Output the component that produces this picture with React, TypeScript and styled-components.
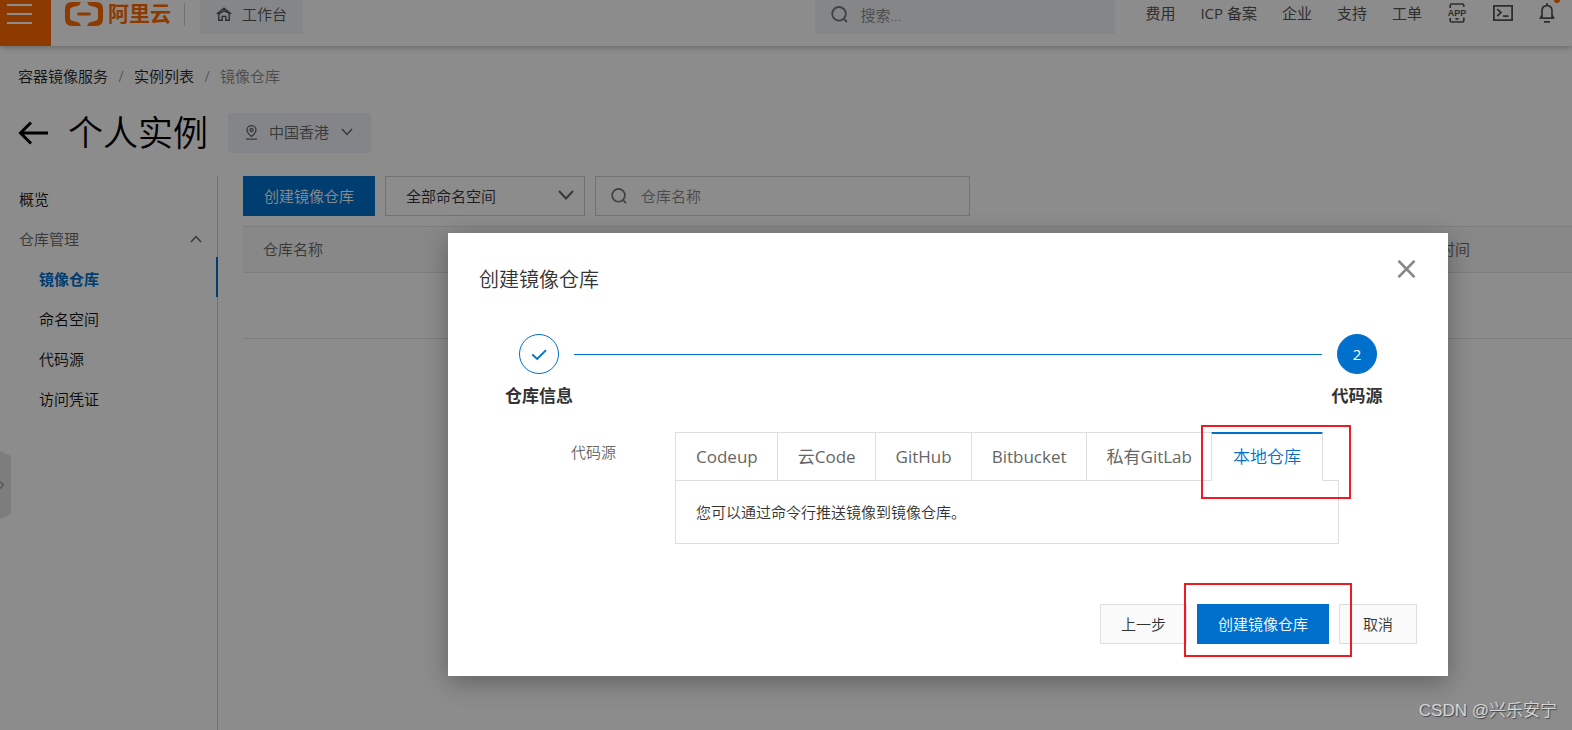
import React from 'react';
import styled, { createGlobalStyle, css } from 'styled-components';

const GlobalStyle = createGlobalStyle`
  *, *::before, *::after { box-sizing: border-box; }
  body {
    margin: 0;
    background: #fff;
    color: #333;
    font-family: "Open Sans", "Noto Sans CJK SC", sans-serif;
    font-size: 15px;
    font-weight: 350;
    line-height: 20px;
  }
  button, input, select { font: inherit; color: inherit; margin: 0; }
  button { cursor: pointer; }
  a { color: inherit; text-decoration: none; }
  svg { display: block; flex: none; }
`;

const Page = styled.div`
  position: relative;
  display: flex;
  flex-direction: column;
  min-height: 100vh;
  overflow: hidden;
`;

const TopBar = styled.header`
  display: flex;
  align-items: flex-start;
  height: 46px;
  padding-right: 17px;
  box-shadow: 0 1px 6px rgba(0, 0, 0, 0.3);
`;

const MenuButton = styled.button`
  width: 51px;
  height: 46px;
  padding: 4px 7px 0;
  border: 0;
  background: #ff6a00;
  display: flex;
  flex-direction: column;
  gap: 7px;
`;

const MenuBar = styled.span`
  height: 2px;
  width: 25px;
  background: #fff;
`;

const Logo = styled.a`
  display: flex;
  align-items: center;
  gap: 5px;
  height: 28px;
  margin-left: 14px;
  color: #ff6a00;
  font-family: "Liberation Sans", "Noto Sans CJK SC", sans-serif;
  font-size: 21px;
  line-height: 24px;
  font-weight: 700;
`;

const Divider = styled.span`
  width: 1px;
  height: 23px;
  margin: 3px 15px 0 13px;
  background: #d0d0d0;
`;

const Workbench = styled.button`
  display: flex;
  align-items: center;
  gap: 10px;
  height: 34px;
  padding: 0 16px 6px;
  border: 0;
  background: #f3f5f8;
  color: #555;
`;

const TopSearch = styled.label`
  display: flex;
  align-items: center;
  gap: 12px;
  width: 300px;
  height: 34px;
  padding: 0 16px 5px;
  margin-left: auto;
  background: #f3f5f8;
  color: #777;
`;

const PlainInput = styled.input`
  flex: 1;
  min-width: 0;
  padding: 0;
  border: 0;
  outline: 0;
  background: none;
  &::placeholder { color: #888; opacity: 1; }
`;

const TopNav = styled.nav`
  display: flex;
  align-items: center;
  gap: 25px;
  height: 26px;
  margin-left: 30px;
  color: #555;
  font-weight: 400;
`;

const NavIcons = styled.div`
  display: flex;
  align-items: center;
  gap: 26px;
`;

const IconButton = styled.button`
  padding: 0;
  border: 0;
  background: none;
  color: #555;
`;

const Bell = styled(IconButton)`
  position: relative;
  &::after {
    content: '';
    position: absolute;
    top: -6px;
    right: -5px;
    width: 6px;
    height: 6px;
    border-radius: 3px;
    background: #ff6a00;
  }
`;

const Breadcrumb = styled.nav`
  display: flex;
  padding: 20px 18px 0;
  color: #222;
`;

const Slash = styled.span`
  width: 26px;
  text-align: center;
  color: #777;
`;

const Current = styled.span`
  color: #888;
`;

const TitleRow = styled.div`
  display: flex;
  align-items: center;
  height: 40px;
  margin-top: 27px;
  padding-left: 18px;
`;

const Title = styled.h1`
  margin: 0 20px;
  color: #000;
  font-size: 35px;
  line-height: 40px;
  font-weight: 350;
`;

const Region = styled.button`
  display: flex;
  align-items: center;
  height: 40px;
  padding: 0 18px 2px;
  gap: 12px;
  border: 0;
  border-radius: 2px;
  background: #f0f3f7;
  color: #666;
`;

const Body = styled.div`
  flex: 1;
  display: flex;
  margin-top: 23px;
`;

const Sidebar = styled.nav`
  width: 218px;
  flex: none;
  padding-top: 1px;
  border-right: 1px solid #ccc;
  color: #111;
`;

const Item = styled.a<{ $sub?: boolean; $active?: boolean }>`
  display: flex;
  align-items: center;
  justify-content: space-between;
  height: 40px;
  padding: 4px 15px 0 ${p => (p.$sub ? 39 : 19)}px;
  ${p => p.$active && css`
    margin-right: -1px;
    border-right: 2px solid #0070cc;
    color: #0070cc;
    font-weight: 700;
  `}
`;

const Group = styled(Item)`
  color: #666;
`;

const Main = styled.main`
  flex: 1;
  min-width: 0;
  margin-left: 25px;
`;

const Toolbar = styled.div`
  display: flex;
  gap: 10px;
  margin-bottom: 10px;
`;

const Button = styled.button<{ $primary?: boolean }>`
  height: 40px;
  min-width: 78px;
  padding: 0 20px;
  border: 1px solid ${p => (p.$primary ? '#0070cc' : '#dedede')};
  background: ${p => (p.$primary ? '#0070cc' : '#fafafa')};
  color: ${p => (p.$primary ? '#fff' : '#333')};
`;

const SelectWrap = styled.div`
  position: relative;
  width: 200px;
  svg {
    position: absolute;
    top: 14px;
    right: 11px;
    pointer-events: none;
  }
`;

const Select = styled.select`
  appearance: none;
  width: 100%;
  height: 40px;
  padding: 0 20px;
  border: 1px solid #d0d0d0;
  border-radius: 0;
  background: #fff;
`;

const RepoSearch = styled.label`
  display: flex;
  align-items: center;
  gap: 14px;
  width: 375px;
  height: 40px;
  padding: 0 15px;
  border: 1px solid #d0d0d0;
  color: #777;
`;

const Table = styled.table`
  width: 100%;
  border-collapse: collapse;
  table-layout: fixed;
  border-top: 1px solid #e3e3e3;
  border-bottom: 1px solid #e3e3e3;
  th {
    height: 46px;
    padding: 0 20px 2px;
    background: #f7f7f7;
    border-bottom: 1px solid #e3e3e3;
    color: #666;
    font-weight: 350;
    text-align: left;
  }
  th:last-child { width: 182px; }
  td { height: 66px; }
`;

const Handle = styled.button`
  position: absolute;
  left: 0;
  top: 451px;
  padding: 0;
  border: 0;
  background: none;
`;

const Mask = styled.div`
  position: absolute;
  inset: 0;
  display: flex;
  align-items: flex-start;
  justify-content: flex-end;
  padding: 233px 124px 0;
  background: rgba(0, 0, 0, 0.45);
`;

const Dialog = styled.section`
  width: 1000px;
  max-width: 100%;
  padding: 27px 31px 32px;
  background: #fff;
  box-shadow: 0 6px 24px rgba(0, 0, 0, 0.3);
`;

const DialogHead = styled.header`
  display: flex;
  align-items: flex-start;
  justify-content: space-between;
`;

const DialogTitle = styled.h2`
  margin: 5px 0 0;
  font-size: 20px;
  line-height: 30px;
  font-weight: 350;
`;

const Steps = styled.ol`
  display: flex;
  list-style: none;
  margin: 39px 0 0;
  padding: 0 25px;
`;

const Step = styled.li`
  display: flex;
  flex-direction: column;
  align-items: center;
  gap: 10px;
  width: 70px;
  font-size: 17px;
  line-height: 24px;
  font-weight: 700;
  white-space: nowrap;
`;

const StepMark = styled.span<{ $current?: boolean }>`
  display: flex;
  align-items: center;
  justify-content: center;
  width: 40px;
  height: 40px;
  border: 1px solid #0070cc;
  border-radius: 50%;
  background: ${p => (p.$current ? '#0070cc' : '#fff')};
  color: ${p => (p.$current ? '#fff' : '#0070cc')};
  font-size: 15px;
  font-weight: 400;
`;

const StepLine = styled.li`
  flex: 1;
  height: 1px;
  margin-top: 20px;
  background: #0070cc;
`;

const Field = styled.div`
  display: grid;
  grid-template-columns: 137px minmax(0, 1fr);
  column-gap: 59px;
  margin-top: 24px;
  padding-right: 78px;
`;

const FieldLabel = styled.span`
  padding-top: 10px;
  text-align: right;
  color: #666;
`;

const TabList = styled.div`
  display: flex;
`;

const Tab = styled.button<{ $active?: boolean }>`
  position: relative;
  height: 49px;
  margin-bottom: -1px;
  padding: 0 19px 0 20px;
  border: 1px solid #dedede;
  border-right-width: 0;
  background: #fff;
  color: #666;
  font-size: 17px;
  font-weight: 400;
  line-height: 24px;
  white-space: nowrap;
  ${p => p.$active && css`
    padding: 0 21px;
    border-right-width: 1px;
    border-bottom-color: #fff;
    box-shadow: inset 0 1px #0070cc;
    border-top-color: #0070cc;
    color: #0070cc;
    font-weight: 350;
  `}
`;

const TabPanel = styled.div`
  padding: 21px 20px;
  border: 1px solid #dedede;
`;

const Footer = styled.footer`
  display: flex;
  justify-content: flex-end;
  gap: 10px;
  margin-top: 60px;
`;

const Marked = styled.div`
  position: relative;
  display: flex;
`;

const Highlight = styled.span<{ $inset: string }>`
  position: absolute;
  inset: ${p => p.$inset};
  z-index: 1;
  border: 2px solid #ed1c24;
  pointer-events: none;
`;

const Watermark = styled.span`
  position: absolute;
  right: 15px;
  bottom: 8px;
  color: #d6d6d6;
  font-family: "Liberation Sans", "Noto Sans CJK SC", sans-serif;
  font-size: 17px;
  line-height: 22px;
  text-shadow: 1px 1px 1px #444;
`;

const SearchIcon = ({ size }: { size: number }) => (
  <svg width={size} height={size} viewBox="0 0 17 17" fill="none" stroke="currentColor" strokeWidth="1.8">
    <circle cx="8" cy="7.8" r="6.8" />
    <path d="M12.6 12.6 16 16" />
  </svg>
);

const Chevron = ({ width, up, stroke = 1.5 }: { width: number; up?: boolean; stroke?: number }) => (
  <svg width={width} height={width / 2 + 2} viewBox={`0 0 ${width} ${width / 2 + 2}`} fill="none" stroke="#666" strokeWidth={stroke}>
    <path d={up ? `M1 ${width / 2 + 1} L${width / 2} 1.5 L${width - 1} ${width / 2 + 1}` : `M1 1 L${width / 2} ${width / 2 + 0.5} L${width - 1} 1`} />
  </svg>
);

const tabs = ['Codeup', '云Code', 'GitHub', 'Bitbucket', '私有GitLab'];
const navLinks = ['费用', 'ICP 备案', '企业', '支持', '工单'];

export default function App() {
  return (
    <Page>
      <GlobalStyle />
      <TopBar>
        <MenuButton aria-label="菜单"><MenuBar /><MenuBar /><MenuBar /></MenuButton>
        <Logo href="#">
          <svg width="38" height="24" viewBox="0 0 38 24" fill="none" stroke="#ff6a00">
            <path fill="#ff6a00" stroke="none" d="M16 0H7Q0 0 0 7V17Q0 24 7 24H16L14 20.4 7 18.8Q5 18.2 5 16V8Q5 5.8 7 5.2L14 3.6ZM22 0H31Q38 0 38 7V17Q38 24 31 24H22L24 20.4 31 18.8Q33 18.2 33 16V8Q33 5.8 31 5.2L24 3.6Z" />
            <path d="M12.5 12H25.5" strokeWidth="3" />
          </svg>
          阿里云
        </Logo>
        <Divider />
        <Workbench>
          <svg width="16" height="14" viewBox="0 0 16 14" fill="none" stroke="currentColor" strokeWidth="1.4">
            <path d="M.8 7 8 1.2 15.2 7M2.8 6V13.2H6.2V9.4H9.8V13.2H13.2V6L8 3.8 2.8 7" />
          </svg>
          工作台
        </Workbench>
        <TopSearch>
          <SearchIcon size={17} />
          <PlainInput placeholder="搜索..." aria-label="搜索" />
        </TopSearch>
        <TopNav>
          {navLinks.map(t => <a href="#" key={t}>{t}</a>)}
          <NavIcons>
            <IconButton aria-label="应用">
              <svg width="20" height="20" viewBox="0 0 20 20" fill="none" stroke="currentColor" strokeWidth="1.7">
                <path d="M3.2 5V2.5Q3.2 1 4.7 1H15.3Q16.8 1 16.8 2.5V4M3.2 15V17.5Q3.2 19 4.7 19H15.3Q16.8 19 16.8 17.5V14.5M8.5 15.8H11.5" />
                <text x="10" y="13" textAnchor="middle" fontSize="9" fontWeight="700" fontFamily="Liberation Sans" fill="currentColor" stroke="none">APP</text>
              </svg>
            </IconButton>
            <IconButton aria-label="终端">
              <svg width="20" height="16" viewBox="0 0 20 16" fill="none" stroke="currentColor" strokeWidth="1.8">
                <path d="M.9.9H19.1V15.1H.9ZM4.2 4.2 8 7.6 4.2 11M10 11.2H15.5" />
              </svg>
            </IconButton>
            <Bell aria-label="通知">
              <svg width="16" height="20" viewBox="0 0 16 20" fill="none" stroke="currentColor" strokeWidth="1.7">
                <path d="M8 0V2.4M3 15V8Q3 2.6 8 2.6T13 8V15M.6 15.2H15.4M5 18.8H11M3 12 1.5 15M13 12 14.5 15" />
              </svg>
            </Bell>
          </NavIcons>
        </TopNav>
      </TopBar>

      <Breadcrumb aria-label="面包屑">
        <a href="#">容器镜像服务</a><Slash>/</Slash>
        <a href="#">实例列表</a><Slash>/</Slash>
        <Current>镜像仓库</Current>
      </Breadcrumb>

      <TitleRow>
        <IconButton aria-label="返回">
          <svg width="30" height="24" viewBox="0 0 30 24" fill="none" stroke="#000" strokeWidth="3">
            <path d="M30 12H2.5M13 1.5 2.5 12 13 22.5" />
          </svg>
        </IconButton>
        <Title>个人实例</Title>
        <Region>
          <svg width="11" height="15" viewBox="0 0 11 15" fill="none" stroke="currentColor" strokeWidth="1.3">
            <path d="M5.5 11.4Q1 7.8 1 5A4.5 4.3 0 0 1 10 5Q10 7.8 5.5 11.4ZM0 14.2H11" />
            <circle cx="5.5" cy="5" r="1.5" />
          </svg>
          中国香港
          <Chevron width={12} />
        </Region>
      </TitleRow>

      <Body>
        <Sidebar>
          <Item href="#">概览</Item>
          <Group href="#">仓库管理<Chevron width={12} up /></Group>
          <Item href="#" $sub $active>镜像仓库</Item>
          <Item href="#" $sub>命名空间</Item>
          <Item href="#" $sub>代码源</Item>
          <Item href="#" $sub>访问凭证</Item>
        </Sidebar>
        <Main>
          <Toolbar>
            <Button $primary>创建镜像仓库</Button>
            <SelectWrap>
              <Select aria-label="命名空间"><option>全部命名空间</option></Select>
              <Chevron width={16} stroke={2} />
            </SelectWrap>
            <RepoSearch>
              <SearchIcon size={16} />
              <PlainInput placeholder="仓库名称" aria-label="仓库名称" />
            </RepoSearch>
          </Toolbar>
          <Table>
            <thead><tr><th>仓库名称</th><th>创建时间</th></tr></thead>
            <tbody><tr><td colSpan={2} /></tr></tbody>
          </Table>
        </Main>
      </Body>

      <Handle aria-label="展开">
        <svg width="11" height="68" viewBox="0 0 11 68" fill="none">
          <path d="M0 0 11 5V63L0 68Z" fill="#e4e4e4" />
          <path d="M0 30.5 3.5 34 0 37.5" stroke="#999" strokeWidth="1.3" />
        </svg>
      </Handle>

      <Mask>
        <Dialog role="dialog" aria-modal="true" aria-labelledby="dialog-title">
          <DialogHead>
            <DialogTitle id="dialog-title">创建镜像仓库</DialogTitle>
            <IconButton aria-label="关闭">
              <svg width="20" height="18" viewBox="0 0 20 18" fill="none" stroke="#888" strokeWidth="2.6">
                <path d="M1.5.8 17.5 17.2M17.5.8 1.5 17.2" />
              </svg>
            </IconButton>
          </DialogHead>
          <Steps>
            <Step>
              <StepMark>
                <svg width="16" height="14" viewBox="0 0 16 14" fill="none" stroke="currentColor" strokeWidth="1.8">
                  <path d="M1.2 7.5 6.2 12 15 3.2" />
                </svg>
              </StepMark>
              仓库信息
            </Step>
            <StepLine aria-hidden="true" />
            <Step><StepMark $current>2</StepMark>代码源</Step>
          </Steps>
          <Field>
            <FieldLabel id="source-label">代码源</FieldLabel>
            <div>
              <TabList role="tablist" aria-labelledby="source-label">
                {tabs.map(t => <Tab role="tab" key={t}>{t}</Tab>)}
                <Marked>
                  <Tab role="tab" aria-selected $active>本地仓库</Tab>
                  <Highlight $inset="-7px -28px -19px -10px" />
                </Marked>
              </TabList>
              <TabPanel role="tabpanel">您可以通过命令行推送镜像到镜像仓库。</TabPanel>
            </div>
          </Field>
          <Footer>
            <Button>上一步</Button>
            <Marked>
              <Button $primary>创建镜像仓库</Button>
              <Highlight $inset="-21px -23px -13px -13px" />
            </Marked>
            <Button>取消</Button>
          </Footer>
        </Dialog>
        <Watermark>CSDN @兴乐安宁</Watermark>
      </Mask>
    </Page>
  );
}
